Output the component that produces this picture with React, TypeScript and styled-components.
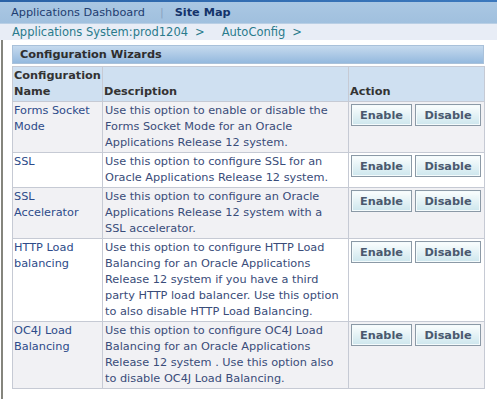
import React from "react";
import styled, { createGlobalStyle } from "styled-components";

const GlobalStyle = createGlobalStyle`
  html, body { margin: 0; padding: 0; background: #ffffff; }
  body { font-family: "DejaVu Sans", Tahoma, sans-serif; font-size: 11.3px; }
`;

const Page = styled.div`
  display: flex;
  flex-direction: column;
  min-height: 100vh;
`;

const TopStrip = styled.div`
  height: 2px;
  background: linear-gradient(90deg, #2a62a6, #3b78bd);
`;

const TabBar = styled.div`
  height: 21px;
  display: flex;
  align-items: center;
  padding-left: 11px;
  background: linear-gradient(#aac7e3, #a0c0de);
  border-bottom: 1px solid #b9cfe5;
  font-size: 11.3px;
`;

const TabLink = styled.span`
  color: #1e3d70;
`;

const TabSep = styled.span`
  color: #8aa3bf;
  margin: 0 11px 0 15px;
`;

const TabCurrent = styled.span`
  color: #14336a;
  font-weight: bold;
`;

const Crumbs = styled.div`
  height: 16px;
  display: flex;
  align-items: center;
  padding-left: 12px;
  background: #e8edf6;
  color: #2a7b8c;
  font-size: 11.5px;
`;

const CrumbSep = styled.span`
  margin: 0 17px 0 7px;
`;

const Content = styled.div`
  flex: 1;
  margin-left: 1px;
  border-left: 2px solid #85857d;
  padding: 5px 13px 10px 9px;
`;

const SectionHeader = styled.div`
  height: 17px;
  display: flex;
  align-items: center;
  padding-left: 7px;
  border: 1px solid #a9c1da;
  background: linear-gradient(#c6daee, #94b9de);
  color: #2e2e2e;
  font-weight: bold;
  margin-bottom: 2px;
`;

const Table = styled.table`
  width: 472px;
  border-collapse: collapse;
  table-layout: fixed;
  line-height: 16px;
`;

const HeadCell = styled.th<{ $w: number }>`
  width: ${(p) => p.$w}px;
  text-align: left;
  vertical-align: bottom;
  font-weight: bold;
  color: #333333;
  background: #cfe0f1;
  border: 1px solid #c6cad4;
  padding: 1px;
`;

const Row = styled.tr<{ $shade: boolean }>`
  background: ${(p) => (p.$shade ? "#f1f1f4" : "#ffffff")};
`;

const NameCell = styled.td`
  vertical-align: top;
  color: #2d4b8a;
  border: 1px solid #c6cad4;
  padding: 1px;
`;

const DescCell = styled.td`
  vertical-align: top;
  color: #394c79;
  border: 1px solid #c6cad4;
  padding: 1px 0 1px 2px;
  white-space: nowrap;
`;

const ActionCell = styled.td`
  vertical-align: top;
  border: 1px solid #c6cad4;
  padding: 2px 1px 1px 2px;
`;

const Buttons = styled.div`
  display: flex;
  gap: 3px;
`;

const Button = styled.button<{ $w: number }>`
  width: ${(p) => p.$w}px;
  height: 22px;
  padding: 0;
  font-family: "DejaVu Sans", Tahoma, sans-serif;
  font-size: 11.3px;
  font-weight: bold;
  color: #4a596e;
  border: 1px solid #8b99a6;
  box-shadow: inset 0 0 0 1px #f4fbfc;
  background: linear-gradient(#fbfefe, #cde6ed);
  cursor: pointer;
`;

const rows = [
  {
    name: "Forms Socket Mode",
    desc: [
      "Use this option to enable or disable the",
      "Forms Socket Mode for an Oracle",
      "Applications Release 12 system.",
    ],
  },
  {
    name: "SSL",
    desc: [
      "Use this option to configure SSL for an",
      "Oracle Applications Release 12 system.",
    ],
  },
  {
    name: "SSL Accelerator",
    desc: [
      "Use this option to configure an Oracle",
      "Applications Release 12 system with a",
      "SSL accelerator.",
    ],
  },
  {
    name: "HTTP Load balancing",
    desc: [
      "Use this option to configure HTTP Load",
      "Balancing for an Oracle Applications",
      "Release 12 system if you have a third",
      "party HTTP load balancer. Use this option",
      "to also disable HTTP Load Balancing.",
    ],
  },
  {
    name: "OC4J Load Balancing",
    desc: [
      "Use this option to configure OC4J Load",
      "Balancing for an Oracle Applications",
      "Release 12 system . Use this option also",
      "to disable OC4J Load Balancing.",
    ],
  },
];

export default function App() {
  return (
    <>
      <GlobalStyle />
      <Page>
        <TopStrip />
        <TabBar>
          <TabLink>Applications Dashboard</TabLink>
          <TabSep>|</TabSep>
          <TabCurrent>Site Map</TabCurrent>
        </TabBar>
        <Crumbs>
          <span>Applications System:prod1204</span>
          <CrumbSep>&gt;</CrumbSep>
          <span>AutoConfig</span>
          <CrumbSep>&gt;</CrumbSep>
        </Crumbs>
        <Content>
          <SectionHeader>Configuration Wizards</SectionHeader>
          <Table>
            <thead>
              <tr>
                <HeadCell $w={87}>Configuration Name</HeadCell>
                <HeadCell $w={243}>Description</HeadCell>
                <HeadCell $w={133}>Action</HeadCell>
              </tr>
            </thead>
            <tbody>
              {rows.map((r, i) => (
                <Row key={r.name} $shade={i % 2 === 0}>
                  <NameCell>{r.name}</NameCell>
                  <DescCell>
                    {r.desc.map((line, j) => (
                      <React.Fragment key={j}>
                        {j > 0 && <br />}
                        {line}
                      </React.Fragment>
                    ))}
                  </DescCell>
                  <ActionCell>
                    <Buttons>
                      <Button $w={61}>Enable</Button>
                      <Button $w={66}>Disable</Button>
                    </Buttons>
                  </ActionCell>
                </Row>
              ))}
            </tbody>
          </Table>
        </Content>
      </Page>
    </>
  );
}
